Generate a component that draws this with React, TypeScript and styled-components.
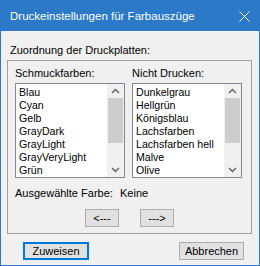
import React from 'react'
import styled, { createGlobalStyle } from 'styled-components'

const GlobalStyle = createGlobalStyle`
  body {
    margin: 0;
    background: #ffffff;
    font-family: 'Liberation Sans', Arial, sans-serif;
  }
`

const Window = styled.div`
  box-sizing: border-box;
  width: 260px;
  height: 266px;
  border: 1px solid #2b79c7;
  background: #f0f0f0;
  display: flex;
  flex-direction: column;
  color: #000;
`
const TitleBar = styled.div`
  height: 30px;
  flex-shrink: 0;
  background: #2b79c7;
  color: #fff;
  display: flex;
  align-items: center;
  justify-content: space-between;
  padding: 0 9px 0 9px;
  font-size: 11.5px;
`
const Body = styled.div`
  padding: 13px 0 0 6px;
  display: flex;
  flex-direction: column;
`
const Label = styled.div<{ $indent?: number }>`
  font-size: 11px;
  line-height: 13px;
  height: 13px;
  padding-left: ${(p) => p.$indent || 0}px;
  white-space: nowrap;
`
const GroupBox = styled.div`
  box-sizing: border-box;
  margin-top: 3px;
  width: 245px;
  height: 174px;
  border: 1px solid #a0a0a0;
  padding: 6px 0 0 7px;
  display: flex;
  flex-direction: column;
`
const Columns = styled.div`
  display: flex;
  gap: 7px;
`
const Column = styled.div`
  display: flex;
  flex-direction: column;
  gap: 3px;
`
const ListBox = styled.div<{ $w: number }>`
  box-sizing: border-box;
  width: ${(p) => p.$w}px;
  height: 95px;
  border: 1px solid #828790;
  background: #fff;
  display: flex;
  overflow: hidden;
`
const Items = styled.div`
  flex: 1;
  padding: 2px 0 0 3px;
  font-size: 10.6px;
  line-height: 13px;
  white-space: nowrap;
  overflow: hidden;
`
const ScrollBar = styled.div`
  width: 17px;
  flex-shrink: 0;
  background: #f0f0f0;
  display: flex;
  flex-direction: column;
`
const ScrollBtn = styled.div`
  height: 14px;
  display: flex;
  align-items: center;
  justify-content: center;
`
const Thumb = styled.div`
  height: 45px;
  margin: 0 1px;
  background: #cdcdcd;
`
const Track = styled.div`
  flex: 1;
`
const InfoRow = styled.div`
  display: flex;
  margin-top: 9px;
  font-size: 11px;
  line-height: 13px;
`
const InfoLabel = styled.span`
  width: 105px;
  white-space: nowrap;
`
const ArrowRow = styled.div`
  display: flex;
  justify-content: center;
  gap: 21px;
  margin-top: 9px;
  padding-right: 7px;
`
const Button = styled.button<{ $w: number; $default?: boolean }>`
  box-sizing: border-box;
  width: ${(p) => p.$w}px;
  height: 18px;
  padding: 0;
  background: #e1e1e1;
  border: ${(p) => (p.$default ? '2px solid #0078d7' : '1px solid #adadad')};
  font-family: 'Liberation Sans', Arial, sans-serif;
  font-size: 11px;
  line-height: 14px;
  color: #000;
`
const Footer = styled.div`
  display: flex;
  justify-content: space-between;
  padding: 8px 15px 0 22px;
`

const Chevron = ({ up }: { up?: boolean }) => (
  <svg width="9" height="6" viewBox="0 0 9 6">
    <path
      d={up ? 'M1 5 L4.5 1.5 L8 5' : 'M1 1 L4.5 4.5 L8 1'}
      fill="none"
      stroke="#606060"
      strokeWidth="1.4"
    />
  </svg>
)

const List: React.FC<{ items: string[]; width: number }> = ({ items, width }) => (
  <ListBox $w={width}>
    <Items>
      {items.map((item) => (
        <div key={item}>{item}</div>
      ))}
    </Items>
    <ScrollBar>
      <ScrollBtn>
        <Chevron up />
      </ScrollBtn>
      <Thumb />
      <Track />
      <ScrollBtn>
        <Chevron />
      </ScrollBtn>
    </ScrollBar>
  </ListBox>
)

const spotColors = ['Blau', 'Cyan', 'Gelb', 'GrayDark', 'GrayLight', 'GrayVeryLight', 'Grün']
const noPrint = ['Dunkelgrau', 'Hellgrün', 'Königsblau', 'Lachsfarben', 'Lachsfarben hell', 'Malve', 'Olive']

export default function App() {
  return (
    <>
      <GlobalStyle />
      <Window>
        <TitleBar>
          <span>Druckeinstellungen für Farbauszüge</span>
          <svg width="11" height="11" viewBox="0 0 11 11">
            <path d="M0.5 0.5 L10.5 10.5 M10.5 0.5 L0.5 10.5" stroke="#fff" strokeWidth="1" />
          </svg>
        </TitleBar>
        <Body>
          <Label $indent={3}>Zuordnung der Druckplatten:</Label>
          <GroupBox>
            <Columns>
              <Column>
                <Label>Schmuckfarben:</Label>
                <List items={spotColors} width={110} />
              </Column>
              <Column>
                <Label>Nicht Drucken:</Label>
                <List items={noPrint} width={110} />
              </Column>
            </Columns>
            <InfoRow>
              <InfoLabel>Ausgewählte Farbe:</InfoLabel>
              <span>Keine</span>
            </InfoRow>
            <ArrowRow>
              <Button $w={34}>&lt;---</Button>
              <Button $w={34}>---&gt;</Button>
            </ArrowRow>
          </GroupBox>
        </Body>
        <Footer>
          <Button $w={66} $default>
            Zuweisen
          </Button>
          <Button $w={65}>Abbrechen</Button>
        </Footer>
      </Window>
    </>
  )
}
